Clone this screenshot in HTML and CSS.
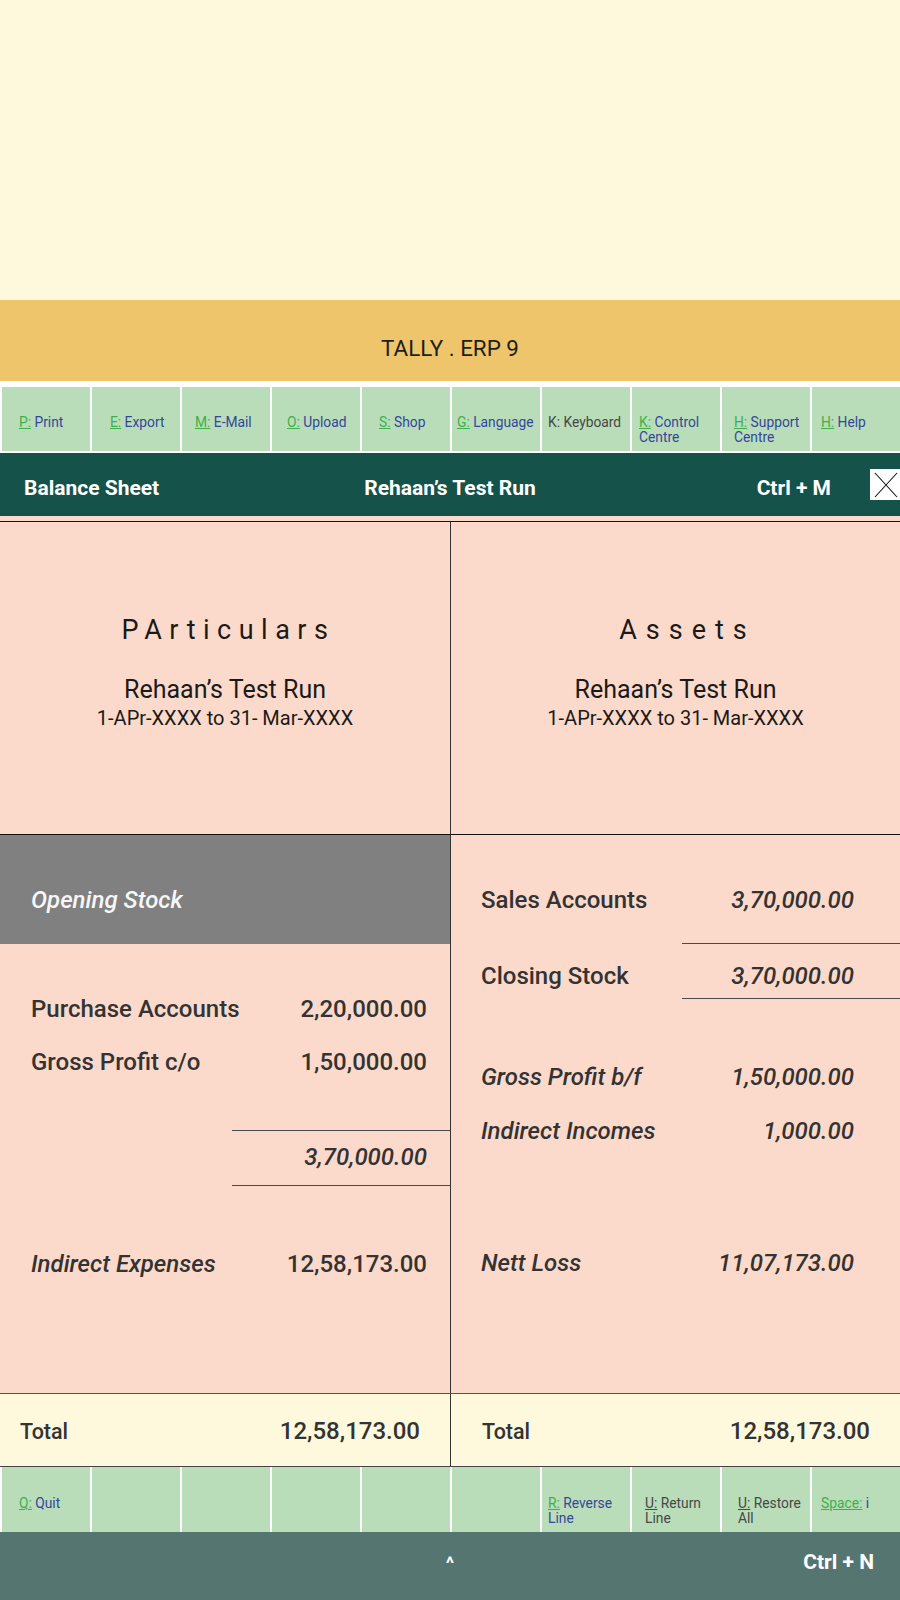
FILE: index.html
```html
<!DOCTYPE html>
<html lang="en">
<head>
<meta charset="utf-8">
<title>Tally ERP 9 - Balance Sheet</title>
<link rel="stylesheet" href="styles.css">
</head>
<body>
<div class="top"></div>
<div class="brand"><span>TALLY . ERP 9</span></div>

<div class="tb tb-top">
  <div class="cell pl17"><span class="key">P:</span> Print</div>
  <div class="cell pl18"><span class="key">E:</span> Export</div>
  <div class="cell pl13"><span class="key">M:</span> E-Mail</div>
  <div class="cell pl15"><span class="key">O:</span> Upload</div>
  <div class="cell pl17"><span class="key">S:</span> Shop</div>
  <div class="cell pl5"><span class="key">G:</span> Language</div>
  <div class="cell pl6 muted">K: Keyboard</div>
  <div class="cell pl7"><div><span class="key">K:</span> Control</div><div>Centre</div></div>
  <div class="cell pl12"><div><span class="key">H:</span> Support</div><div>Centre</div></div>
  <div class="cell pl9"><span class="key">H:</span> Help</div>
</div>

<div class="titlebar">
  <div class="tt-left"><span class="tt-text">Balance Sheet</span></div>
  <div class="tt-center"><span class="tt-text">Rehaan’s Test Run</span></div>
  <div class="tt-right">
    <span class="tt-text">Ctrl + M</span>
    <svg class="close" width="30" height="31" viewBox="0 0 30 31">
      <rect x="0" y="0" width="30" height="31" fill="#ffffff"/>
      <path d="M5 4 L27 28 M27 4 L5 28" stroke="#111" stroke-width="1.1" fill="none"/>
    </svg>
  </div>
</div>

<div class="sheet">
  <div class="row head-row">
    <div class="col head-cell">
      <div class="head-title">PArticulars</div>
      <div class="head-company">Rehaan’s Test Run</div>
      <div class="head-date">1-APr-XXXX to 31- Mar-XXXX</div>
    </div>
    <div class="col head-cell head-right">
      <div class="head-title assets">Assets</div>
      <div class="head-company">Rehaan’s Test Run</div>
      <div class="head-date">1-APr-XXXX to 31- Mar-XXXX</div>
    </div>
  </div>

  <div class="row body-row">
    <div class="col left">
      <div class="gray"><span class="it">Opening Stock</span></div>
      <div class="line-item li-left m52"><span>Purchase Accounts</span><span>2,20,000.00</span></div>
      <div class="line-item li-left m27"><span>Gross Profit c/o</span><span>1,50,000.00</span></div>
      <div class="rule m55"></div>
      <div class="line-item li-left m13"><span></span><span class="it">3,70,000.00</span></div>
      <div class="rule m15"></div>
      <div class="line-item li-left m65"><span class="it">Indirect Expenses</span><span>12,58,173.00</span></div>
    </div>
    <div class="col right">
      <div class="line-item li-right m52"><span>Sales Accounts</span><span class="it">3,70,000.00</span></div>
      <div class="rule m30"></div>
      <div class="line-item li-right m19"><span>Closing Stock</span><span class="it">3,70,000.00</span></div>
      <div class="rule m9"></div>
      <div class="line-item li-right m65"><span class="it">Gross Profit b/f</span><span class="it">1,50,000.00</span></div>
      <div class="line-item li-right m28"><span class="it">Indirect Incomes</span><span class="it">1,000.00</span></div>
      <div class="line-item li-right m106"><span class="it">Nett Loss</span><span class="it">11,07,173.00</span></div>
    </div>
  </div>

  <div class="row total-row">
    <div class="col total-left"><span class="total-label">Total</span><span>12,58,173.00</span></div>
    <div class="col total-right"><span class="total-label">Total</span><span>12,58,173.00</span></div>
  </div>
</div>

<div class="tb tb-bottom">
  <div class="cell pl17"><span class="key">Q:</span> Quit</div>
  <div class="cell"></div>
  <div class="cell"></div>
  <div class="cell"></div>
  <div class="cell"></div>
  <div class="cell"></div>
  <div class="cell pl6"><div><span class="key">R:</span> Reverse</div><div>Line</div></div>
  <div class="cell pl13 muted"><div><span class="ukey">U:</span> Return</div><div>Line</div></div>
  <div class="cell pl16 muted"><div><span class="ukey">U:</span> Restore</div><div>All</div></div>
  <div class="cell pl9"><span class="key">Space:</span> i</div>
</div>

<div class="bottombar">
  <div></div>
  <div class="caret">^</div>
  <div class="bb-right"><span>Ctrl + N</span></div>
</div>
</body>
</html>
```

FILE: styles.css
```css
* { box-sizing: border-box; }
html, body { margin: 0; padding: 0; }
body {
  width: 900px;
  height: 1600px;
  overflow: hidden;
  background: #ffffff;
  font-family: Roboto, "Noto Sans", "Liberation Sans", Arial, sans-serif;
  color: #333333;
}

.top { height: 300px; background: #fef8dc; }

.brand {
  height: 81px;
  background: #eec56b;
  display: flex;
  justify-content: center;
  align-items: center;
  font-size: 22.4px;
  line-height: 26px;
  color: #1e1e1e;
}
.brand span { padding-top: 15px; }

/* toolbars */
.tb {
  display: grid;
  grid-template-columns: repeat(10, 88px);
  column-gap: 2px;
  padding-left: 2px;
  background: #ffffff;
}
.tb-top { height: 64px; margin-top: 6px; }
.tb-bottom { height: 65px; }
.cell {
  background: #b9ddb9;
  font-size: 13.8px;
  line-height: 15px;
  padding-top: 28px;
  padding-right: 1px;
  color: #34469c;
  white-space: nowrap;
}
.tb-bottom .cell { padding-top: 29px; }
.key { color: #3db04b; text-decoration: underline; }
.ukey { text-decoration: underline; }
.muted { color: #474747; }
.pl5 { padding-left: 5px; }
.pl6 { padding-left: 6px; }
.pl7 { padding-left: 7px; }
.pl9 { padding-left: 9px; }
.pl12 { padding-left: 12px; }
.pl13 { padding-left: 13px; }
.pl15 { padding-left: 15px; }
.pl16 { padding-left: 16px; }
.pl17 { padding-left: 17px; }
.pl18 { padding-left: 18px; }

/* title bar */
.titlebar {
  margin-top: 2px;
  height: 63px;
  background: #15524a;
  color: #ffffff;
  display: grid;
  grid-template-columns: 1fr auto 1fr;
  align-items: center;
  font-weight: 700;
  font-size: 21px;
  line-height: 24px;
}
.tt-text { display: inline-block; padding-top: 7px; }
.tt-left { padding-left: 24px; }
.tt-right {
  display: flex;
  justify-content: flex-end;
  align-items: center;
  gap: 39px;
}
.close { display: block; }

/* sheet */
.sheet { background: #fcdacb; padding-top: 5px; }
.row { display: grid; grid-template-columns: 451px 449px; }
.row > .col:first-child { border-right: 1px solid #333333; }

.head-row {
  height: 314px;
  border-top: 1px solid #111111;
  border-bottom: 1px solid #111111;
}
.head-cell { text-align: center; padding-top: 92px; color: #1a1a1a; }
.head-title {
  font-size: 27px;
  line-height: 32px;
  letter-spacing: 7.5px;
  padding-left: 7px;
}
.head-title.assets { letter-spacing: 9px; padding-left: 24px; }
.head-company { margin-top: 31px; font-size: 25px; line-height: 26px; }
.head-date { margin-top: 5px; font-size: 20px; line-height: 20px; }

.body-row { height: 558px; }
.col.left, .col.right { display: flex; flex-direction: column; }

.gray {
  height: 109px;
  background: #808080;
  color: #f7f7f7;
  padding-left: 31px;
  padding-top: 52px;
  font-size: 24px;
  line-height: 26px;
  font-weight: 500;
}

.line-item {
  display: flex;
  justify-content: space-between;
  font-size: 24px;
  line-height: 26px;
  font-weight: 500;
  color: #333333;
  padding-left: 31px;
}
.li-left { padding-right: 23px; }
.li-right { padding-left: 30px; padding-right: 46px; }
.it { font-style: italic; }

.rule {
  margin-left: 232px;
  height: 1px;
  background: #4a4a4a;
  flex: none;
}
.right .rule { margin-left: 231px; }

.m9 { margin-top: 9px; }
.m13 { margin-top: 13px; }
.m15 { margin-top: 15px; }
.m19 { margin-top: 19px; }
.m27 { margin-top: 27px; }
.m28 { margin-top: 28px; }
.m30 { margin-top: 30px; }
.m52 { margin-top: 52px; }
.m55 { margin-top: 55px; }
.m65 { margin-top: 65px; }
.m106 { margin-top: 106px; }

.total-row {
  height: 74px;
  background: #fef8dc;
  border-top: 1px solid #555555;
  border-bottom: 1px solid #444444;
  font-size: 24px;
  line-height: 26px;
  font-weight: 500;
  color: #333333;
}
.total-row .col {
  display: flex;
  justify-content: space-between;
  align-items: baseline;
  padding-top: 24px;
}
.total-label { font-size: 21.5px; }
.total-left { padding-left: 20px; padding-right: 30px; }
.total-right { padding-left: 31px; padding-right: 30px; }

/* bottom bar */
.bottombar {
  height: 68px;
  background: #557670;
  color: #ffffff;
  display: grid;
  grid-template-columns: 1fr auto 1fr;
  align-items: center;
  font-weight: 700;
}
.caret { font-size: 19px; line-height: 20px; padding-bottom: 4px; }
.bb-right {
  display: flex;
  justify-content: flex-end;
  padding-right: 26px;
  font-size: 21px;
  line-height: 24px;
  padding-bottom: 8px;
}
```
